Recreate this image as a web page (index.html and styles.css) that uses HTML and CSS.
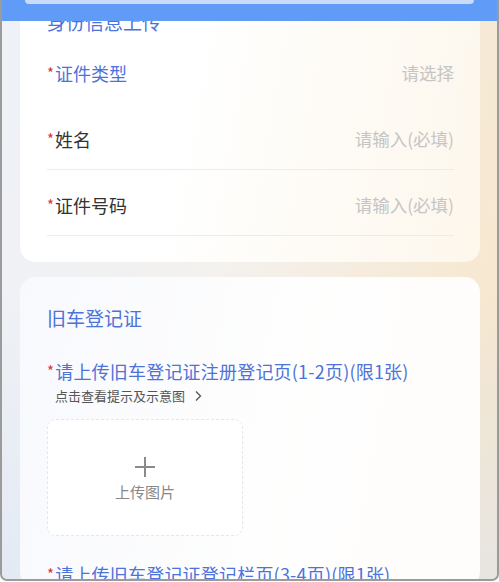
FILE: index.html
```html
<!DOCTYPE html>
<html lang="zh-CN">
<head>
<meta charset="utf-8">
<title>身份信息上传</title>
<link rel="stylesheet" href="styles.css">
</head>
<body>
<div class="frame">
  <div class="topbar"><div class="pill"></div></div>
  <div class="content">
    <section class="card card-id">
      <h2 class="title">身份信息上传</h2>
      <div class="row row-first">
        <span class="label label-blue"><i class="req">*</i>证件类型</span>
        <span class="ph">请选择</span>
      </div>
      <div class="row">
        <span class="label"><i class="req">*</i>姓名</span>
        <span class="ph">请输入(必填)</span>
      </div>
      <div class="row">
        <span class="label"><i class="req">*</i>证件号码</span>
        <span class="ph">请输入(必填)</span>
      </div>
    </section>
    <section class="card card-car">
      <h2 class="title title-car">旧车登记证</h2>
      <div class="up-label"><i class="req">*</i>请上传旧车登记证注册登记页(1-2页)(限1张)</div>
      <div class="hint">点击查看提示及示意图
        <svg class="chev" width="8" height="12" viewBox="0 0 8 12"><path d="M2 1.5 L6.5 6 L2 10.5" fill="none" stroke="#555" stroke-width="1.3"/></svg>
      </div>
      <div class="upload">
        <svg class="plus" width="22" height="22" viewBox="0 0 22 22"><path d="M11 1 V21 M1 11 H21" stroke="#8a8a8a" stroke-width="2"/></svg>
        <span class="up-text">上传图片</span>
      </div>
      <div class="up-label up-label-2"><i class="req">*</i>请上传旧车登记证登记栏页(3-4页)(限1张)</div>
    </section>
  </div>
</div>
</body>
</html>
```

FILE: styles.css
```css
* { box-sizing: border-box; margin: 0; padding: 0; }
html, body { width: 499px; height: 582px; overflow: hidden; background: #fff; }
body { font-family: "Noto Sans CJK SC", "Noto Sans", sans-serif; }

.frame {
  position: relative;
  width: 499px;
  height: 581px;
  border: 2px solid #9b9b9b;
  border-top: none;
  border-radius: 0 0 7px 7px;
  overflow: hidden;
  background: linear-gradient(100deg, #eef1f7 0%, #f4f1ee 45%, #f7e6ca 100%);
}

.topbar {
  position: absolute;
  left: 0; top: 0; right: 0;
  height: 21px;
  background: #5f9bf7;
  z-index: 2;
}
.pill {
  margin: 0 23px 0 23px;
  height: 4px;
  background: #c6dcf8;
  border-radius: 0 0 12px 12px;
}

.content {
  padding: 0 17px 0 18px;
  display: flex;
  flex-direction: column;
  gap: 15px;
  background: linear-gradient(180deg, rgba(255,255,255,0) 0%, rgba(255,255,255,0) 50%, rgba(214,227,246,0.5) 100%);
  height: 100%;
}

.card {
  border-radius: 15px;
  padding: 0 26px 0 27px;
}
.card-id {
  padding-top: 9px;
  padding-bottom: 26px;
  background: linear-gradient(100deg, #ffffff 35%, #fdf7ec 100%);
}
.card-car {
  padding-top: 28px;
  background: linear-gradient(100deg, #f8f9fd 0%, #fefefe 55%, #fefdfb 100%);
  flex: 1;
}

.title {
  font-size: 19px;
  font-weight: 400;
  line-height: 26px;
  color: #4d72d9;
}
.title-car { margin-bottom: 27px; }

.row {
  display: flex;
  justify-content: space-between;
  align-items: center;
  height: 66px;
  padding: 22px 0 17px;
  border-bottom: 1px solid #ececec;
  line-height: 26px;
}
.row-first { margin-top: 3px; border-bottom-color: transparent; }

.label {
  font-size: 18px;
  color: #333;
}
.label-blue { color: #4d72d9; }
.req {
  font-style: normal;
  color: #d8373d;
  font-size: 15px;
  line-height: 1;
  vertical-align: 2px;
  margin-right: 1px;
}
.ph {
  font-size: 17.5px;
  color: #c5c5c5;
}

.up-label {
  font-size: 18px;
  line-height: 26px;
  height: 26px;
  letter-spacing: 0.2px;
  color: #4d72d9;
  white-space: nowrap;
}
.hint {
  margin-top: 3px;
  padding-left: 8px;
  font-size: 13px;
  line-height: 18px;
  color: #555;
  display: flex;
  align-items: center;
  gap: 9px;
}
.upload {
  margin-top: 14px;
  width: 196px;
  height: 117px;
  border: 1px dashed #e6e6e6;
  border-radius: 9px;
  background: #fff;
  display: flex;
  flex-direction: column;
  align-items: center;
  padding-top: 36px;
  gap: 4px;
}
.up-text {
  font-size: 15px;
  line-height: 20px;
  color: #888;
}
.up-label-2 { margin-top: 25px; }
```
